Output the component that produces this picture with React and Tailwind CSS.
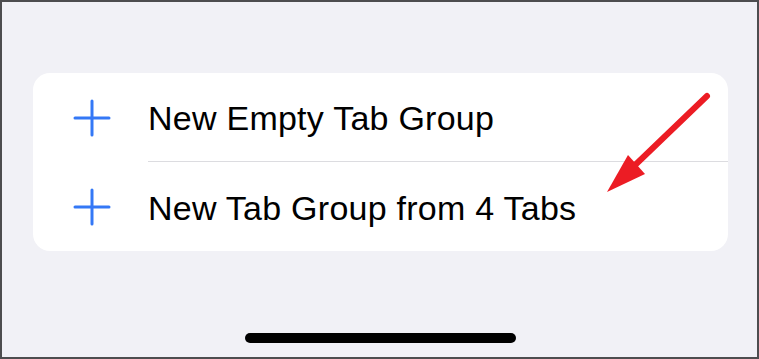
import React from "react";

function PlusIcon() {
  return (
    <svg width="38" height="38" viewBox="0 0 38 38" className="shrink-0">
      <path d="M19 2 V36 M2 19 H36" stroke="#3478f6" strokeWidth="3" strokeLinecap="round" fill="none" />
    </svg>
  );
}

function MenuRow({ label, divider }) {
  return (
    <div className="flex h-[89px] items-center">
      <div className="flex w-[115px] shrink-0 justify-center pl-[2px]">
        <PlusIcon />
      </div>
      <div
        className={`flex h-full flex-1 items-center pt-[2px] ${divider ? "border-b border-[#dcdce0]" : ""}`}
      >
        <span className="text-[34px] leading-none tracking-[0.25px] text-black">{label}</span>
      </div>
    </div>
  );
}

export default function App() {
  return (
    <div
      className="relative h-[359px] w-[759px] overflow-hidden border-2 border-[#4d4d4f] bg-[#f1f1f6]"
      style={{ fontFamily: '"Liberation Sans", Arial, sans-serif' }}
    >
      {/* action sheet card */}
      <div className="ml-[31px] mt-[71px] w-[695px] overflow-hidden rounded-[17px] bg-white">
        <MenuRow label="New Empty Tab Group" divider />
        <MenuRow label="New Tab Group from 4 Tabs" />
      </div>

      {/* home indicator */}
      <div className="mt-[82px] flex justify-center pl-[2px]">
        <div className="h-[10px] w-[271px] rounded-full bg-black" />
      </div>

      {/* red annotation arrow */}
      <svg
        className="pointer-events-none absolute left-0 top-0"
        width="759"
        height="359"
        viewBox="0 0 759 359"
      >
        <path d="M705 94 L630 166" stroke="#ec1c24" strokeWidth="6" strokeLinecap="round" fill="none" />
        <path d="M605 190 L626 153 L643 172 Z" fill="#ec1c24" />
      </svg>
    </div>
  );
}
